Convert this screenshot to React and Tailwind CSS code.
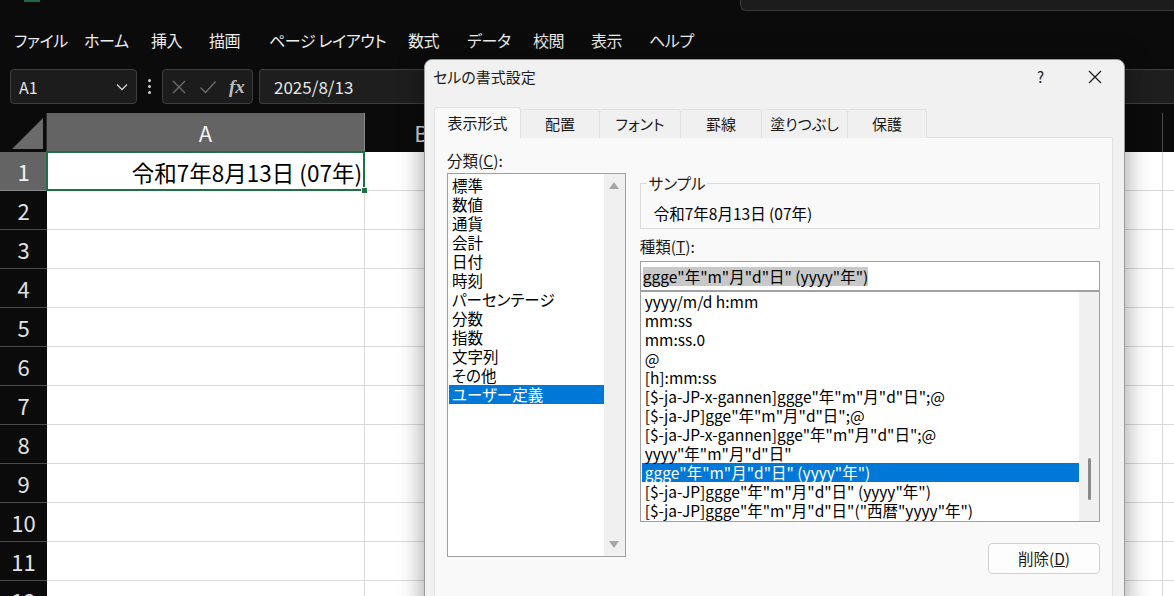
import React from 'react'

const menus = [
  ['ファイル', 'w-[70px]'],
  ['ホーム', 'w-[67px]'],
  ['挿入', 'w-[58px]'],
  ['描画', 'w-[60px]'],
  ['ページ レイアウト', 'w-[139px]'],
  ['数式', 'w-[59px]'],
  ['データ', 'w-[66px]'],
  ['校閲', 'w-[58px]'],
  ['表示', 'w-[58px]'],
  ['ヘルプ', 'w-[60px]'],
]

const categories = ['標準', '数値', '通貨', '会計', '日付', '時刻', 'パーセンテージ', '分数', '指数', '文字列', 'その他', 'ユーザー定義']

const formats = [
  'yyyy/m/d h:mm',
  'mm:ss',
  'mm:ss.0',
  '@',
  '[h]:mm:ss',
  '[$-ja-JP-x-gannen]ggge"年"m"月"d"日";@',
  '[$-ja-JP]gge"年"m"月"d"日";@',
  '[$-ja-JP-x-gannen]gge"年"m"月"d"日";@',
  'yyyy"年"m"月"d"日"',
  'ggge"年"m"月"d"日" (yyyy"年")',
  '[$-ja-JP]ggge"年"m"月"d"日" (yyyy"年")',
  '[$-ja-JP]ggge"年"m"月"d"日"("西暦"yyyy"年")',
]

const tabs = [
  ['配置', 'w-[79px]'],
  ['フォント', 'w-[81px]'],
  ['罫線', 'w-[81px]'],
  ['塗りつぶし', 'w-[86px]'],
  ['保護', 'w-[79px]'],
]

const cols = ['B', 'C', 'D', 'E', 'F', 'G', 'H', 'I']
const rows = [2, 3, 4, 5, 6, 7, 8, 9, 10, 11, 12]

const FormulaBar = () => (
  <div className="flex items-center h-[35px] mt-[17px]">
    <div className="ml-[10px] w-[127px] h-[35px] flex items-center justify-between rounded-[4px] border border-[#3e3e3e] bg-[#1c1c1c] pl-[8px] pr-[8px]">
      <span className="text-[16px] text-[#e6e6e6] leading-none">A1</span>
      <svg width="12" height="8" viewBox="0 0 12 8">
        <path d="M1 1.5 L6 6.5 L11 1.5" fill="none" stroke="#cfcfcf" strokeWidth="1.3" />
      </svg>
    </div>
    <div className="w-[25px] flex flex-col items-center gap-[3px]">
      <span className="w-[3px] h-[3px] rounded-full bg-[#cfcfcf]" />
      <span className="w-[3px] h-[3px] rounded-full bg-[#cfcfcf]" />
      <span className="w-[3px] h-[3px] rounded-full bg-[#cfcfcf]" />
    </div>
    <div className="w-[91px] h-[35px] flex items-center rounded-[4px] border border-[#3e3e3e] bg-[#1c1c1c] pl-[8px] gap-[12px]">
      <svg width="16" height="16" viewBox="0 0 16 16">
        <path d="M2 2 L14 14 M14 2 L2 14" stroke="#6e6e6e" strokeWidth="1.3" />
      </svg>
      <svg width="18" height="16" viewBox="0 0 18 16">
        <path d="M1.5 8.5 L6.5 13.5 L16.5 2.5" fill="none" stroke="#6e6e6e" strokeWidth="1.3" />
      </svg>
      <span className="font-['Liberation_Serif',serif] text-[19px] italic font-bold text-[#bdbdbd] leading-none">fx</span>
    </div>
    <div className="ml-[6px] flex-1 h-[35px] flex items-center rounded-l-[4px] border border-r-0 border-[#3e3e3e] bg-[#1e1e1e] pl-[14px]">
      <span className="text-[17px] text-[#e6e6e6]">2025/8/13</span>
    </div>
  </div>
)

const Sheet = () => (
  <div className="mt-[9px]">
    <div className="flex h-[39px]">
      <div className="w-[47px] h-[39px] shrink-0 flex items-end justify-end pr-[3px] pb-[3px] border-r border-[#2a2a2a]">
        <div className="w-[31px] h-[31px] bg-[#6a6a6a] [clip-path:polygon(100%_0,100%_100%,0_100%)]" />
      </div>
      <div className="w-[318px] shrink-0 bg-[#646464] flex items-center justify-center text-[22px] text-[#f2f2f2] border-r border-[#8a8a8a]">A</div>
      {cols.map((c) => (
        <div key={c} className="w-[114px] shrink-0 flex items-center justify-center text-[22px] text-[#d6d6d6] border-r border-[#4a4a4a]">{c}</div>
      ))}
    </div>
    <div className="flex h-[39px]">
      <div className="w-[47px] shrink-0 bg-[#646464] flex items-center justify-center text-[22px] text-[#f2f2f2] border-b border-[#8a8a8a]">1</div>
      <div className="relative w-[318px] shrink-0 bg-white flex items-center justify-end pr-[2px] pt-[3px] text-[22.5px] text-black border-r border-b border-[#d9d9d9]">
        令和7年8月13日 (07年)
        <div className="absolute -left-[1px] -top-[1px] -right-[1px] -bottom-[1px] border-2 border-[#1e7145]" />
        <div className="absolute -right-[4px] -bottom-[4px] w-[7px] h-[7px] bg-[#1e7145] border border-white" />
      </div>
      {cols.map((c) => (
        <div key={c} className="w-[114px] shrink-0 bg-white border-r border-b border-[#d9d9d9]" />
      ))}
    </div>
    {rows.map((r) => (
      <div key={r} className="flex h-[39px]">
        <div className="w-[47px] shrink-0 flex items-center justify-center text-[22px] text-[#e2e2e2] border-b border-[#4a4a4a]">{r}</div>
        <div className="w-[318px] shrink-0 bg-white border-r border-b border-[#d9d9d9]" />
        {cols.map((c) => (
          <div key={c} className="w-[114px] shrink-0 bg-white border-r border-b border-[#d9d9d9]" />
        ))}
      </div>
    ))}
  </div>
)

const Dialog = () => (
  <div className="absolute left-[424px] top-[59px] w-[701px] h-[560px] bg-[#f1f1f1] rounded-t-[8px] border border-[#9a9a9a] shadow-[0_0_26px_rgba(0,0,0,0.4)] text-[#1a1a1a]">
    <div className="h-[47px] flex items-start pt-[7px]">
      <span className="ml-[8px] text-[15px] leading-[20px]">セルの書式設定</span>
      <span className="ml-auto mr-[44px] text-[15px] leading-[20px]">?</span>
      <svg className="mr-[22px] mt-[3px]" width="14" height="14" viewBox="0 0 14 14">
        <path d="M1 1 L13 13 M13 1 L1 13" stroke="#1a1a1a" strokeWidth="1.2" />
      </svg>
    </div>
    <div className="flex items-end ml-[9px] h-[31px]">
      <div className="relative z-10 w-[87px] h-[31px] bg-[#f9f9f9] border border-b-0 border-[#e2e2e2] rounded-t-[3px] flex items-center justify-center text-[15px]">表示形式</div>
      {tabs.map(([t, w]) => (
        <div key={t} className={`${w} h-[29px] bg-[#f0f0f0] border border-l-0 border-b-0 border-[#e2e2e2] rounded-t-[3px] flex items-center justify-center text-[15px]`}>{t}</div>
      ))}
    </div>
    <div className="ml-[9px] w-[679px] h-[470px] -mt-[1px] bg-[#f9f9f9] border border-[#e2e2e2] flex px-[12px] text-[15.5px]">
      <div className="w-[179px] pt-[13px]">
        <div className="leading-[19px]">分類(<span className="underline">C</span>):</div>
        <div className="mt-[3px] h-[384px] border border-[#a0a0a0] bg-white flex">
          <div className="flex-1 pt-[2px] pl-[1px]">
            {categories.map((c) => (
              <div key={c} className={`h-[19px] leading-[19px] pl-[3px] ${c === 'ユーザー定義' ? 'bg-[#0078d7] text-white' : 'text-black'}`}>{c}</div>
            ))}
          </div>
          <div className="w-[21px] bg-[#f0f0f0] flex flex-col items-center justify-between py-[8px]">
            <svg width="10" height="7" viewBox="0 0 10 7"><path d="M5 0 L10 7 L0 7 Z" fill="#a6a6a6" /></svg>
            <svg width="10" height="7" viewBox="0 0 10 7"><path d="M0 0 L10 0 L5 7 Z" fill="#a6a6a6" /></svg>
          </div>
        </div>
      </div>
      <div className="w-[461px] ml-[14px] pt-[45px] flex flex-col">
        <div className="h-[46px] border border-[#dcdcdc]">
          <div className="-mt-[10px] ml-[6px] w-fit px-[2px] bg-[#f9f9f9] leading-[19px]">サンプル</div>
          <div className="mt-[11px] ml-[13px] leading-[19px] text-black">令和7年8月13日 (07年)</div>
        </div>
        <div className="mt-[8px] leading-[19px]">種類(<span className="underline">T</span>):</div>
        <div className="mt-[5px] h-[30px] border border-[#a0a0a0] bg-white flex items-center pl-[2px]">
          <span className="bg-[#c8c8c8] text-black leading-[19px]">ggge"年"m"月"d"日" (yyyy"年")</span>
        </div>
        <div className="h-[231px] border border-[#a0a0a0] bg-white flex">
          <div className="flex-1 pl-[1px]">
            {formats.map((f) => (
              <div key={f} className={`h-[19px] leading-[19px] pl-[3px] whitespace-nowrap ${f === 'ggge"年"m"月"d"日" (yyyy"年")' ? 'bg-[#0078d7] text-white' : 'text-black'}`}>{f}</div>
            ))}
          </div>
          <div className="w-[20px] bg-[#f0f0f0] flex flex-col items-center pt-[166px]">
            <div className="w-[3px] h-[42px] rounded-full bg-[#8a8a8a]" />
          </div>
        </div>
        <div className="mt-[21px] self-end w-[112px] h-[31px] rounded-[4px] border border-[#d0d0d0] bg-[#fdfdfd] flex items-center justify-center">
          削除(<span className="underline">D</span>)
        </div>
      </div>
    </div>
  </div>
)

export default function App() {
  return (
    <div className="relative w-[1174px] h-[596px] overflow-hidden bg-[#0b0b0b] font-['Noto_Sans_CJK_JP','Noto_Sans',sans-serif] [font-feature-settings:'palt']">
      <div className="flex h-[11px]">
        <div className="ml-[24px] w-[16px] h-[2px] bg-[#1f6b45]" />
        <div className="ml-[700px] flex-1 border border-t-0 border-r-0 border-[#3a3a3a] rounded-bl-[6px] bg-[#1c1c1c]" />
      </div>
      <div className="flex h-[24px] mt-[17px] pl-[14px] items-center text-[16px] tracking-[-0.4px] text-[#ededed] leading-[24px]">
        {menus.map(([m, w]) => (
          <span key={m} className={`${w} shrink-0 whitespace-nowrap`}>{m}</span>
        ))}
      </div>
      <FormulaBar />
      <Sheet />
      <Dialog />
    </div>
  )
}
